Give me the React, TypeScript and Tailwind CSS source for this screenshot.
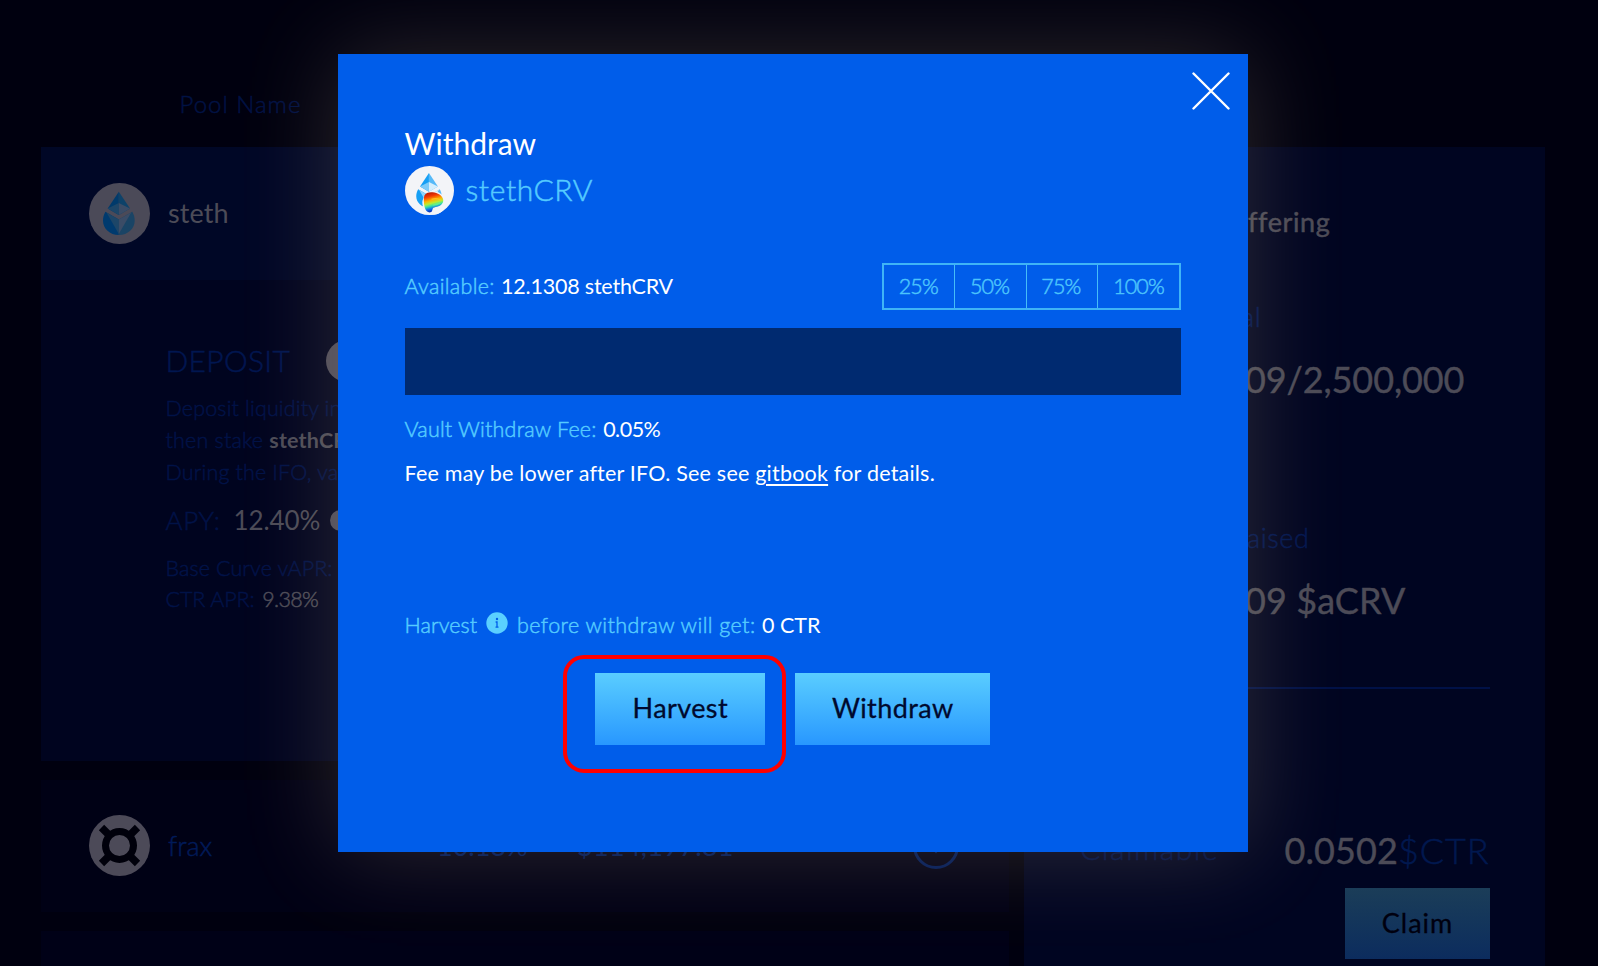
import type { ReactNode } from 'react';

const light = 'font-light [-webkit-text-stroke:0.5px_currentColor]';

function LidoDrop() {
  return (
    <>
      <circle cx="30.5" cy="30.5" r="30.5" fill="#f3f4f8" />
      <path d="M29.8 8.7 18.7 25.6 29.8 32Z" fill="#169ff5" />
      <path d="M29.8 8.7 41 25.6 29.8 32Z" fill="#56b9f8" />
      <path d="M29.8 20 18.7 25.6 29.8 32Z" fill="#7ccaf9" />
      <path d="M29.8 20 41 25.6 29.8 32Z" fill="#d5eefd" />
      <path d="M16.4 28.8 29.8 36.6V52C20.8 52 14 45.4 14 37.7c0-3.2.8-6 2.4-8.9Z" fill="#169ff5" />
      <path d="M43.3 28.8 29.8 36.6V52C38.9 52 45.7 45.4 45.7 37.7c0-3.2-.8-6-2.4-8.9Z" fill="#56b9f8" />
      <path d="M17.5 29.5 29.8 36.6V51Z" fill="#8fd2fa" />
      <path d="M42.2 29.5 29.8 36.6V51Z" fill="#d9effd" />
    </>
  );
}

function DimDrop() {
  return (
    <svg viewBox="0 0 61 61" className="size-[61px] shrink-0">
      <circle cx="30.5" cy="30.5" r="30.5" fill="#4b4a58" />
      <path d="M29.8 8.7 18.7 25.6 29.8 32Z" fill="#003a6b" />
      <path d="M29.8 8.7 41 25.6 29.8 32Z" fill="#0d4269" />
      <path d="M29.8 20 18.7 25.6 29.8 32Z" fill="#1d4668" />
      <path d="M29.8 20 41 25.6 29.8 32Z" fill="#3b4c66" />
      <path d="M16.4 28.8 29.8 36.6V52C20.8 52 14 45.4 14 37.7c0-3.2.8-6 2.4-8.9Z" fill="#003a6e" />
      <path d="M43.3 28.8 29.8 36.6V52C38.9 52 45.7 45.4 45.7 37.7c0-3.2-.8-6-2.4-8.9Z" fill="#1a4465" />
      <path d="M17.5 29.5 29.8 36.6V51Z" fill="#1d4668" />
      <path d="M42.2 29.5 29.8 36.6V51Z" fill="#3b4c66" />
    </svg>
  );
}

function StethCrvIcon() {
  return (
    <svg viewBox="0 0 61 61" className="size-[49px] shrink-0">
      <defs>
        <linearGradient id="curveHeat" x1="0.2" y1="0" x2="0.45" y2="1">
          <stop offset="0" stopColor="#b01505" />
          <stop offset="0.22" stopColor="#f23a05" />
          <stop offset="0.42" stopColor="#ffb400" />
          <stop offset="0.56" stopColor="#b6ee35" />
          <stop offset="0.68" stopColor="#38e2a4" />
          <stop offset="0.82" stopColor="#0a6ff0" />
          <stop offset="1" stopColor="#0512a0" />
        </linearGradient>
      </defs>
      <LidoDrop />
      <circle cx="36" cy="46" r="14.4" fill="#f3f4f8" />
      <path
        d="M24 37c1.500-3.400 6-4.700 10.500-4.200 6 .7 12 4.200 13 8.800.8 4.500-2.500 7.600-7.500 9-2.600.7-4.500.8-5.200 2-.9 1.500-.6 4.600-3.200 5.100-3.300.6-6.200-2.500-7.200-6.700-1-4.300-1.400-10.800-.4-14Z"
        fill="url(#curveHeat)"
      />
      <path d="M33 41.500c4-1.500 8-1 11.500 1" stroke="#ffc52a" strokeWidth="1.600" fill="none" opacity=".8" />
      <path d="M35 48.500c3-.3 6-1 9-2.600" stroke="#6df08c" strokeWidth="2" fill="none" opacity=".8" />
    </svg>
  );
}

function FraxIcon() {
  return (
    <svg viewBox="0 0 61 61" className="size-[61px] shrink-0">
      <circle cx="30.500" cy="30.500" r="30.500" fill="#4c4a58" />
      <path d="M12.500 12.500l36 36M48.500 12.500l-36 36" stroke="#00000b" strokeWidth="7.500" />
      <circle cx="30.500" cy="30.500" r="14" fill="#4c4a58" stroke="#00000b" strokeWidth="7" />
    </svg>
  );
}

function InfoIcon() {
  return (
    <svg viewBox="0 0 22 22" className="size-[22px] shrink-0">
      <circle cx="11" cy="11" r="10.700" fill="#5ad0ff" />
      <circle cx="11" cy="7" r="1.200" fill="#005dea" />
      <path d="M9.600 10H11v5.200M9.500 15.200h3" stroke="#005dea" strokeWidth="1.300" fill="none" />
    </svg>
  );
}

function PoolList() {
  return (
    <div className="flex w-[968px] shrink-0 flex-col">
      <div className="h-[147px] shrink-0 pt-[89px] pl-[139px]">
        <p className={`text-[24px] leading-[30px] tracking-[1px] text-[#001244] ${light}`}>Pool Name</p>
      </div>
      <div className="flex h-[132.5px] shrink-0 items-center gap-[18px] bg-[#000726] pl-[48.5px]">
        <DimDrop />
        <span className="text-[27px] tracking-[0.1px] text-[#4c4b57]">steth</span>
      </div>
      <div className={`h-[481.5px] shrink-0 bg-[#00041f] pt-[61px] pl-[125px] text-[21.5px] text-[#001247] ${light}`}>
        <div className="flex h-10 items-center">
          <h2 className="w-[160px] text-[30px] tracking-[0.3px] text-[#001650]">DEPOSIT</h2>
          <span className="size-[42px] rounded-full bg-[#4c4a58]" />
        </div>
        <div className="mt-[11px] leading-8 whitespace-nowrap">
          <p className="tracking-[0.15px]">Deposit liquidity in</p>
          <p className="tracking-[0.2px]">
            then stake <b className="font-bold tracking-[0.2px] text-[#4c4b57] [-webkit-text-stroke:0]">stethCR</b>
          </p>
          <p className="tracking-[0.15px]">During the IFO, va</p>
        </div>
        <div className="mt-[15px] flex h-9 items-center text-[26px]">
          <span className="w-[68px] tracking-[0.6px]">APY:</span>
          <span className="w-[96px] font-normal tracking-[-0.1px] text-[#4c4b57] [-webkit-text-stroke:0]">12.40%</span>
          <span className="size-[21px] rounded-full bg-[#4c4a58]" />
        </div>
        <div className="mt-[14px] leading-[31.5px]">
          <p className="tracking-[0.1px]">Base Curve vAPR:</p>
          <p className="tracking-[-0.1px]">
            CTR APR: <span className="ml-0.5 tracking-[-0.7px] text-[#4c4b57]">9.38%</span>
          </p>
        </div>
      </div>
      <div className="mt-[18.5px] flex h-[132.5px] shrink-0 items-center bg-[#000115] pl-[48.5px] text-[27px] text-[#001a58]">
        <FraxIcon />
        <span className={`ml-[18px] w-[269px] ${light}`}>frax</span>
        <span className="w-[140px] text-[#001a58]">10.18%</span>
        <span className="w-[336px] tracking-[0.3px] text-[#001a58]">$114,197.81</span>
        <svg viewBox="0 0 46 46" className="size-[46px]" fill="none" stroke="#001a58" strokeWidth="3">
          <circle cx="23" cy="23" r="21.500" />
          <path d="M16 22l7 7 7-7" strokeWidth="2" />
        </svg>
      </div>
      <div className="mt-[19px] h-10 shrink-0 bg-[#000117]" />
    </div>
  );
}

function Figure({ label, children, className }: { label: ReactNode; children: ReactNode; className: string }) {
  return (
    <div className={`pl-[221px] ${className}`}>
      <p className={`text-[27px] leading-10 tracking-[0.6px] text-[#001650] ${light}`}>{label}</p>
      <p className="mt-[18px] text-[36px] leading-[48px] text-[#4c4b57] [-webkit-text-stroke:0.4px_currentColor]">{children}</p>
    </div>
  );
}

function Offering() {
  return (
    <div className="mt-[147px] ml-[15.5px] h-[819px] w-[521px] shrink-0 bg-[#000521] pt-[54.5px]">
      <h2 className="pl-[224px] text-[27px] leading-10 tracking-[0.6px] text-[#4c4b57] [-webkit-text-stroke:0.5px_currentColor]">ffering</h2>
      <Figure label={<span className="-ml-1">al</span>} className="mt-[55px]">
        <span className="tracking-[-0.1px]">09/2,500,000</span>
      </Figure>
      <Figure label={<span className="ml-0.5">aised</span>} className="mt-[115px]">
        <span className="tracking-[0.1px]">09 $aCRV</span>
      </Figure>
      <div className="mt-[63px] ml-[54px] h-[2px] w-[412px] bg-[#001147]" />
      <div className="mt-[137px] flex h-12 items-center pr-[55px] pl-[56px]">
        <span className={`mb-0.5 w-[204.500px] text-[30px] tracking-[1.5px] text-[#001247] ${light}`}>Claimable</span>
        <span className="text-[36px] tracking-[0.1px] text-[#4c4b57] [-webkit-text-stroke:0.4px_currentColor]">0.0502</span>
        <span className={`text-[36px] tracking-[0.9px] text-[#00184f] ${light}`}>$CTR</span>
      </div>
      <div className="mt-[14px] flex justify-end pr-[55px]">
        <button className="h-[71px] w-[145px] bg-linear-to-b from-[#1b3d58] to-[#0c2c5e] text-[27px] tracking-[1px] text-[#00000f] [-webkit-text-stroke:0.3px_currentColor]">
          Claim
        </button>
      </div>
    </div>
  );
}

function WithdrawDialog() {
  return (
    <div className="relative h-[798px] w-[909.5px] bg-[#005dea] px-[66.5px] pt-[71px] text-[21.5px] text-white shadow-[0_0_90px_rgba(255,230,180,0.18)]">
      <svg viewBox="0 0 38 38" className="absolute top-[17.500px] right-[17.500px] size-[38px]" stroke="#fff" strokeWidth="2.400" strokeLinecap="round">
        <path d="M1.500 1.500 36.500 36.500M36.500 1.500 1.500 36.500" />
      </svg>
      <h1 className="text-[30px] leading-9">Withdraw</h1>
      <div className="mt-[5px] flex items-center gap-3">
        <StethCrvIcon />
        <span className={`-mt-[3px] text-[30px] tracking-[0.6px] text-[#55cbff] ${light}`}>stethCRV</span>
      </div>
      <div className="mt-12 flex items-center justify-between">
        <p className="tracking-[-0.2px]">
          <span className={`mr-px tracking-[0.3px] text-[#55cbff] ${light}`}>Available:</span> 12.1308 stethCRV
        </p>
        <div className={`flex h-[47px] divide-x-[1.500px] divide-[#45bdf8] border-2 border-[#3fb4f6] tracking-[-0.9px] text-[#4cc4fc] ${light}`}>
          {['25%', '50%', '75%'].map((p) => (
            <button key={p} className="w-[71.3px] pr-0.5">{p}</button>
          ))}
          <button className="w-[81px]">100%</button>
        </div>
      </div>
      <div className="mt-[18px] h-[67px] bg-[#002a70]" />
      <p className="mt-[17.500px] leading-8">
        <span className={`tracking-[0.2px] text-[#55cbff] ${light}`}>Vault Withdraw Fee:</span>{' '}
        <span className="ml-px tracking-[-0.5px]">0.05%</span>
      </p>
      <p className="mt-3 leading-8 tracking-[0.21px]">
        Fee may be lower after IFO. See see <a className="underline decoration-[1.500px] underline-offset-[3px]">gitbook</a> for details.
      </p>
      <div className={`mt-[121px] flex h-8 items-center text-[#55cbff] ${light}`}>
        <span className="w-[81px] tracking-[0.1px]">Harvest</span>
        <span className="mb-[5px]"><InfoIcon /></span>
        <span className="ml-[9.500px] tracking-[0.42px]">before withdraw will get:</span>
        <span className="ml-[6.500px] font-normal text-white [-webkit-text-stroke:0]">0 CTR</span>
      </div>
      <div className="mt-[31px] flex justify-center gap-[30px] text-[27px] tracking-[0.4px] text-[#00092e]">
        <button className="relative h-[72px] w-[170px] bg-linear-to-b from-[#5acdff] to-[#2897ff] [-webkit-text-stroke:0.3px_currentColor]">
          Harvest
          <span className="absolute -top-[18px] -left-8 h-[118px] w-[223px] rounded-[21px] border-4 border-[#ff0000]" />
        </button>
        <button className="h-[72px] w-[195px] bg-linear-to-b from-[#5acdff] to-[#2897ff] [-webkit-text-stroke:0.3px_currentColor]">Withdraw</button>
      </div>
    </div>
  );
}

export default function App() {
  return (
    <div className="relative h-[966px] w-[1598px] overflow-hidden bg-[#00000f] font-['Lato',sans-serif]">
      <div className="flex h-full pl-[40.5px]">
        <PoolList />
        <Offering />
      </div>
      <div className="absolute inset-0 pt-[54px] pl-[338px]">
        <WithdrawDialog />
      </div>
    </div>
  );
}
